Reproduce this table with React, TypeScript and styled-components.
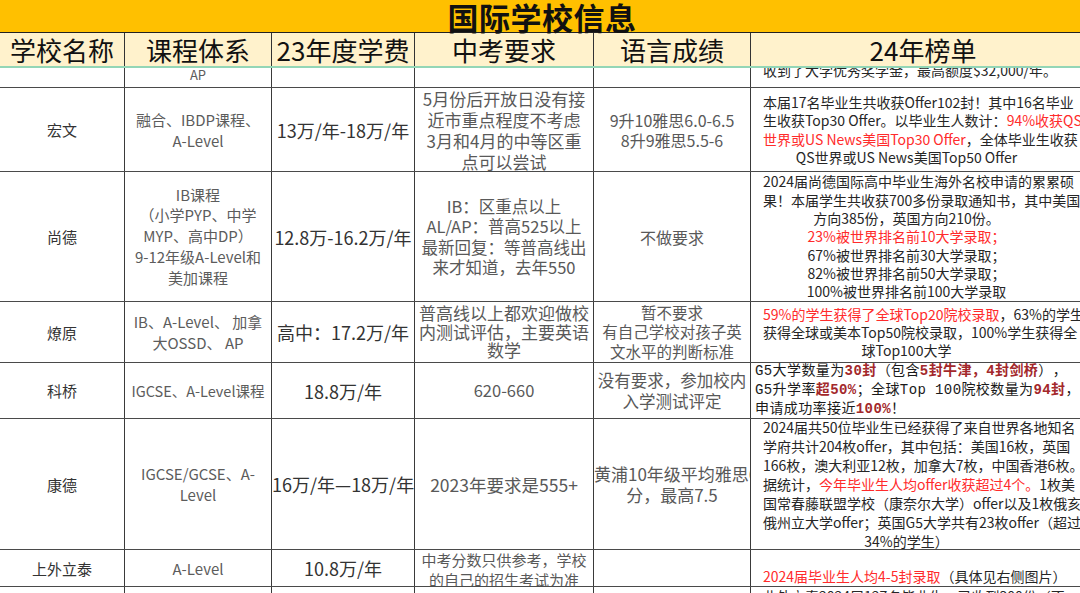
import styled, { createGlobalStyle, css } from 'styled-components';

// page reset, sheet font
const GlobalStyle = createGlobalStyle`
  html, body {
    margin: 0;
    padding: 0;
    background: #ffffff;
  }
  body {
    font-family: "Noto Sans CJK SC", "Noto Sans", "Liberation Sans", sans-serif;
    text-spacing-trim: space-all;
  }
`;

const COLS = '125px 147px 143px 179px 157px 345px';

// visible window of the spreadsheet
const Page = styled.div`
  width: 1080px;
  height: 593px;
  overflow: hidden;
  background: #fff;
`;

const Sheet = styled.div`
  width: 1096px;
`;

// merged yellow title cell
const TitleBar = styled.div`
  height: 33px;
  box-sizing: border-box;
  padding-right: 12px;
  background: #ffc000;
  border-bottom: 1px solid #222;
  display: flex;
  align-items: center;
  justify-content: center;
  font-size: 31px;
  line-height: 33px;
  font-weight: 700;
  color: #111;
  letter-spacing: 0.5px;
`;

// frozen column headers
const HeaderRow = styled.div`
  display: grid;
  grid-template-columns: ${COLS};
  height: 35px;
  box-sizing: border-box;
  background: #fff2cc;
  border-bottom: 2px solid #93d6b6;
`;

const HeaderCell = styled.div`
  border-right: 1px solid #333;
  display: flex;
  align-items: center;
  justify-content: center;
  font-size: 26px;
  line-height: 33px;
  color: #111;
  white-space: nowrap;
`;

// one school
const Row = styled.div<{ $h: number }>`
  display: grid;
  grid-template-columns: ${COLS};
  height: ${(p) => p.$h}px;
  box-sizing: border-box;
  border-bottom: 1px solid #4a4a4a;
`;

type CellProps = { $size?: number; $lh?: number; $v?: 'top' | 'center' | 'bottom' };

const cellBase = css<CellProps>`
  border-right: 1px solid #3a3a3a;
  display: flex;
  flex-direction: column;
  justify-content: ${(p) => (p.$v === 'top' ? 'flex-start' : p.$v === 'bottom' ? 'flex-end' : 'center')};
  text-align: center;
  overflow: hidden;
  white-space: nowrap;
  min-width: 0;
`;

const NameCell = styled.div<CellProps>`
  ${cellBase};
  font-size: 15px;
  color: #333;
`;

const CourseCell = styled.div<CellProps>`
  ${cellBase};
  font-size: ${(p) => p.$size ?? 15}px;
  line-height: ${(p) => p.$lh ?? 21}px;
  color: #5c5c5c;
`;

const FeeCell = styled.div<CellProps>`
  ${cellBase};
  font-size: 18px;
  color: #333;
`;

const ReqCell = styled.div<CellProps>`
  ${cellBase};
  font-size: ${(p) => p.$size ?? 17}px;
  line-height: ${(p) => p.$lh ?? 21}px;
  color: #595959;
`;

const LangCell = styled.div<CellProps>`
  ${cellBase};
  font-size: ${(p) => p.$size ?? 16}px;
  line-height: ${(p) => p.$lh ?? 20}px;
  color: #595959;
`;

const RankCell = styled.div<CellProps & { $mono?: boolean }>`
  ${cellBase};
  align-items: stretch;
  padding: ${(p) => (p.$mono ? '0 0 0 4px' : '0 45px 0 12px')};
  text-align: ${(p) => (p.$mono ? 'left' : 'center')};
  font-size: ${(p) => p.$size ?? 14}px;
  line-height: ${(p) => p.$lh ?? 18.5}px;
  color: #262626;
  ${(p) =>
    p.$mono &&
    css`
      font-family: "Liberation Mono", "Noto Sans CJK SC", monospace;
      letter-spacing: 0.4px;
      color: #1a1a1a;
    `}
`;

// row that is scrolled half under the frozen header
const ClippedText = styled.div<{ $pb: number; $size: number }>`
  padding-bottom: ${(p) => p.$pb}px;
  line-height: 16px;
  font-size: ${(p) => p.$size}px;
`;

const Red = styled.span`
  color: #ff2b2b;
`;

const DarkRed = styled.b`
  color: #a3282b;
  font-weight: 700;
`;

function App() {
  return (
    <Page>
      <GlobalStyle />
      <Sheet>
        <TitleBar>国际学校信息</TitleBar>
        <HeaderRow>
          <HeaderCell>学校名称</HeaderCell>
          <HeaderCell>课程体系</HeaderCell>
          <HeaderCell>23年度学费</HeaderCell>
          <HeaderCell>中考要求</HeaderCell>
          <HeaderCell>语言成绩</HeaderCell>
          <HeaderCell>24年榜单</HeaderCell>
        </HeaderRow>

        <Row $h={20}>
          <NameCell $v="bottom" />
          <CourseCell $v="bottom">
            <ClippedText $pb={4} $size={13}>AP</ClippedText>
          </CourseCell>
          <FeeCell />
          <ReqCell />
          <LangCell />
          <RankCell $v="bottom">
            <ClippedText $pb={9} $size={14}>收到了大学优秀奖学金，最高额度$32,000/年。</ClippedText>
          </RankCell>
        </Row>

        <Row $h={84}>
          <NameCell>宏文</NameCell>
          <CourseCell>
            融合、IBDP课程、
            <br />
            A-Level
          </CourseCell>
          <FeeCell>13万/年-18万/年</FeeCell>
          <ReqCell>
            5月份后开放日没有接
            <br />
            近市重点程度不考虑
            <br />
            3月和4月的中等区重
            <br />
            点可以尝试
          </ReqCell>
          <LangCell>
            9升10雅思6.0-6.5
            <br />
            8升9雅思5.5-6
          </LangCell>
          <RankCell>
            <div>
              本届17名毕业生共收获Offer102封！其中16名毕业
              <br />
              生收获Top30 Offer。以毕业生人数计：<Red>94%收获QS</Red>
              <br />
              <Red>世界或US News美国Top30 Offer</Red>，全体毕业生收获
              <br />
              QS世界或US News美国Top50 Offer
            </div>
          </RankCell>
        </Row>

        <Row $h={130}>
          <NameCell>尚德</NameCell>
          <CourseCell $lh={20.7}>
            IB课程
            <br />
            （小学PYP、中学
            <br />
            MYP、高中DP）
            <br />
            9-12年级A-Level和
            <br />
            美加课程
          </CourseCell>
          <FeeCell>12.8万-16.2万/年</FeeCell>
          <ReqCell $size={16.5} $lh={20.5}>
            IB：区重点以上
            <br />
            AL/AP：普高525以上
            <br />
            最新回复：等普高线出
            <br />
            来才知道，去年550
          </ReqCell>
          <LangCell>不做要求</LangCell>
          <RankCell $lh={18.3}>
            <div>
              2024届尚德国际高中毕业生海外名校申请的累累硕
              <br />
              果！本届学生共收获700多份录取通知书，其中美国
              <br />
              方向385份，英国方向210份。
              <br />
              <Red>23%被世界排名前10大学录取；</Red>
              <br />
              67%被世界排名前30大学录取；
              <br />
              82%被世界排名前50大学录取；
              <br />
              100%被世界排名前100大学录取
            </div>
          </RankCell>
        </Row>

        <Row $h={61}>
          <NameCell>燎原</NameCell>
          <CourseCell>
            IB、A-Level、 加拿
            <br />
            大OSSD、 AP
          </CourseCell>
          <FeeCell>高中：17.2万/年</FeeCell>
          <ReqCell $lh={18.5}>
            普高线以上都欢迎做校
            <br />
            内测试评估，主要英语
            <br />
            数学
          </ReqCell>
          <LangCell $size={15.5} $lh={19.5}>
            暂不要求
            <br />
            有自己学校对孩子英
            <br />
            文水平的判断标准
          </LangCell>
          <RankCell $lh={18}>
            <div>
              <Red>59%的学生获得了全球Top20院校录取</Red>，63%的学生
              <br />
              获得全球或美本Top50院校录取，100%学生获得全
              <br />
              球Top100大学
            </div>
          </RankCell>
        </Row>

        <Row $h={56}>
          <NameCell>科桥</NameCell>
          <CourseCell $size={14.5}>IGCSE、A-Level课程</CourseCell>
          <FeeCell>18.8万/年</FeeCell>
          <ReqCell $size={16.5}>620-660</ReqCell>
          <LangCell $size={16.5} $lh={21}>
            没有要求，参加校内
            <br />
            入学测试评定
          </LangCell>
          <RankCell $mono $lh={19}>
            <div>
              G5大学数量为<DarkRed>30封</DarkRed>（包含<DarkRed>5封牛津，4封剑桥</DarkRed>），
              <br />
              G5升学率<DarkRed>超50%</DarkRed>；全球Top 100院校数量为<DarkRed>94封</DarkRed>，
              <br />
              申请成功率接近<DarkRed>100%</DarkRed>！
            </div>
          </RankCell>
        </Row>

        <Row $h={131}>
          <NameCell>康德</NameCell>
          <CourseCell>
            IGCSE/GCSE、A-
            <br />
            Level
          </CourseCell>
          <FeeCell>16万/年—18万/年</FeeCell>
          <ReqCell $size={17.5}>2023年要求是555+</ReqCell>
          <LangCell $size={17} $lh={21}>
            黄浦10年级平均雅思6
            <br />
            分，最高7.5
          </LangCell>
          <RankCell $lh={19}>
            <div>
              2024届共50位毕业生已经获得了来自世界各地知名
              <br />
              学府共计204枚offer，其中包括：美国16枚，英国
              <br />
              166枚，澳大利亚12枚，加拿大7枚，中国香港6枚。
              <br />
              据统计，<Red>今年毕业生人均offer收获超过4个。</Red>1枚美
              <br />
              国常春藤联盟学校（康奈尔大学）offer以及1枚俄亥
              <br />
              俄州立大学offer；英国G5大学共有23枚offer（超过
              <br />
              34%的学生）
            </div>
          </RankCell>
        </Row>

        <Row $h={37}>
          <NameCell>上外立泰</NameCell>
          <CourseCell>A-Level</CourseCell>
          <FeeCell>10.8万/年</FeeCell>
          <ReqCell $size={15} $lh={20} $v="top">
            中考分数只供参考，学校
            <br />
            的自己的招生考试为准
          </ReqCell>
          <LangCell />
          <RankCell $v="bottom" $size={14} $lh={20}>
            <div>
              <Red>2024届毕业生人均4-5封录取</Red>（具体见右侧图片）
            </div>
          </RankCell>
        </Row>

        <Row $h={30}>
          <NameCell />
          <CourseCell />
          <FeeCell />
          <ReqCell />
          <LangCell />
          <RankCell $v="top" $size={14}>
            <div>此外立泰2024届127名毕业生，已收到300份（不</div>
          </RankCell>
        </Row>
      </Sheet>
    </Page>
  );
}

export default App;
